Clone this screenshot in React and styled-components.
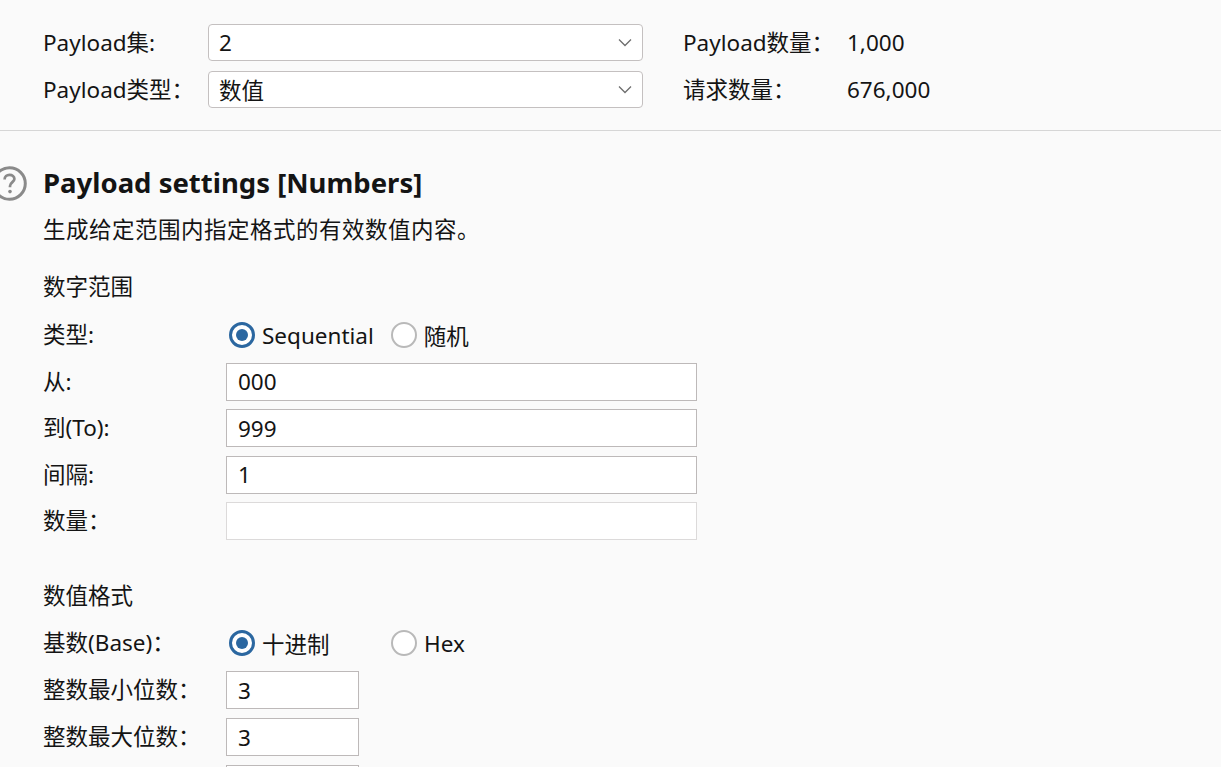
import React from 'react';
import styled, { createGlobalStyle } from 'styled-components';

const GlobalStyle = createGlobalStyle`
  html, body {
    margin: 0;
    padding: 0;
    background: #fafafa;
    overflow: hidden;
  }
  body {
    font-family: "Noto Sans", "Noto Sans CJK SC", sans-serif;
    color: #141414;
  }
`;

const Page = styled.div`
  width: 1221px;
  height: 767px;
  overflow: hidden;
  background: #fafafa;
`;

const TopSection = styled.div`
  display: grid;
  grid-template-columns: 165px 435px 204px auto;
  grid-auto-rows: 37px;
  row-gap: 10px;
  align-items: center;
  padding: 24px 0 22px 43px;
  border-bottom: 1px solid #d6d6d6;
`;

const Label = styled.div`
  font-size: 22.5px;
  line-height: 30px;
  white-space: nowrap;
`;

const Select = styled.div`
  height: 37px;
  box-sizing: border-box;
  display: flex;
  align-items: center;
  justify-content: space-between;
  padding: 0 10px 0 10px;
  background: #fff;
  border: 1px solid #c4c0c0;
  border-radius: 4px;
  font-size: 22.5px;
`;

const Stat = styled(Label)`
  padding-left: 40px;
`;

const Settings = styled.div`
  padding: 34px 0 0 43px;
`;

const TitleRow = styled.div`
  display: flex;
  align-items: center;
  margin-left: -51px;
  gap: 16px;
  height: 36px;
`;

const Title = styled.h2`
  margin: 0;
  font-size: 27.5px;
  font-weight: 700;
  line-height: 36px;
`;

const Description = styled(Label)`
  margin-top: 14px;
  letter-spacing: 0.5px;
`;

const GroupTitle = styled(Label)`
  margin-top: ${p => p.$top}px;
`;

const FormGrid = styled.div`
  display: grid;
  grid-template-columns: 183px auto;
  grid-auto-rows: 38px;
  row-gap: ${p => p.$gap}px;
  align-items: center;
  margin-top: ${p => p.$top}px;
`;

const Input = styled.div`
  box-sizing: border-box;
  width: ${p => p.$width}px;
  height: 38px;
  display: flex;
  align-items: center;
  padding-left: 11px;
  background: #fff;
  border: 1px solid ${p => (p.$disabled ? '#dcdada' : '#bdb9b9')};
  font-size: 22.5px;
`;

const Radios = styled.div`
  display: flex;
  align-items: center;
  padding-left: 3px;
`;

const RadioOption = styled.div`
  display: flex;
  align-items: center;
  gap: 7px;
  font-size: 22.5px;
  min-width: ${p => p.$min || 0}px;
  margin-right: 17px;
`;

const RadioCircle = styled.span`
  box-sizing: border-box;
  width: 26px;
  height: 26px;
  border-radius: 50%;
  border: ${p => (p.$checked ? '3px solid #2b67a0' : '2px solid #b9b9b9')};
  background: #fff;
  display: flex;
  align-items: center;
  justify-content: center;
  &::after {
    content: '';
    display: ${p => (p.$checked ? 'block' : 'none')};
    width: 12px;
    height: 12px;
    border-radius: 50%;
    background: #2b67a0;
  }
`;

const Chevron = () => (
  <svg width="14" height="9" viewBox="0 0 14 9">
    <path d="M1 1.5 L7 7.5 L13 1.5" fill="none" stroke="#6e6e6e" strokeWidth="1.3" />
  </svg>
);

const HelpIcon = () => (
  <svg width="35" height="35" viewBox="0 0 35 35">
    <circle cx="17.5" cy="17.5" r="15.8" fill="none" stroke="#8a8a8a" strokeWidth="3" />
    <path
      d="M12.6 13.4 C12.6 10.4 14.8 8.8 17.5 8.8 C20.3 8.8 22.4 10.4 22.4 13.1 C22.4 15.8 18 16.6 18 20 L18 21.2"
      fill="none"
      stroke="#8a8a8a"
      strokeWidth="2.7"
    />
    <circle cx="18" cy="25.6" r="1.8" fill="#8a8a8a" />
  </svg>
);

const Radio = ({ checked, label, min }) => (
  <RadioOption $min={min}>
    <RadioCircle $checked={checked} />
    {label}
  </RadioOption>
);

export default function App() {
  return (
    <Page>
      <GlobalStyle />
      <TopSection>
        <Label>Payload集:</Label>
        <Select>2<Chevron /></Select>
        <Stat>Payload数量：</Stat>
        <Label>1,000</Label>
        <Label>Payload类型：</Label>
        <Select>数值<Chevron /></Select>
        <Stat>请求数量：</Stat>
        <Label>676,000</Label>
      </TopSection>
      <Settings>
        <TitleRow>
          <HelpIcon />
          <Title>Payload settings [Numbers]</Title>
        </TitleRow>
        <Description>生成给定范围内指定格式的有效数值内容。</Description>
        <GroupTitle $top={27}>数字范围</GroupTitle>
        <FormGrid $top={14} $gap={8.5}>
          <Label>类型:</Label>
          <Radios>
            <Radio checked label="Sequential" />
            <Radio label="随机" />
          </Radios>
          <Label>从:</Label>
          <Input $width={471}>000</Input>
          <Label>到(To):</Label>
          <Input $width={471}>999</Input>
          <Label>间隔:</Label>
          <Input $width={471}>1</Input>
          <Label>数量：</Label>
          <Input $width={471} $disabled />
        </FormGrid>
        <GroupTitle $top={41}>数值格式</GroupTitle>
        <FormGrid $top={13} $gap={9}>
          <Label>基数(Base)：</Label>
          <Radios>
            <Radio checked label="十进制" min={145} />
            <Radio label="Hex" />
          </Radios>
          <Label>整数最小位数：</Label>
          <Input $width={133}>3</Input>
          <Label>整数最大位数：</Label>
          <Input $width={133}>3</Input>
          <span />
          <Input $width={133} />
        </FormGrid>
      </Settings>
    </Page>
  );
}
